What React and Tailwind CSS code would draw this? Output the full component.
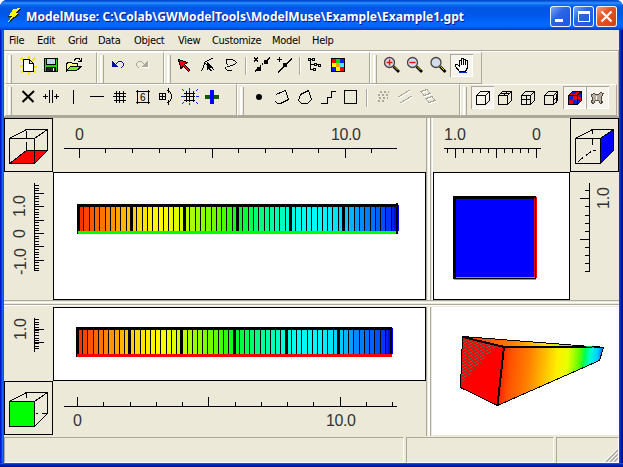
import React from "react";

const GRAY = "#aca899";

// Drawing surface whose coordinates are those of the window itself.
function Pane({ x, y, w, h, className = "", children }) {
  return (
    <svg
      className={"block shrink-0 " + className}
      width={w}
      height={h}
      viewBox={`${x} ${y} ${w} ${h}`}
      shapeRendering="crispEdges"
      fill="none"
      stroke="#000"
    >
      {children}
    </svg>
  );
}

function Tool({ x, y, pressed, children }) {
  return (
    <button
      className={
        "size-[23px] shrink-0 " +
        (pressed
          ? "bg-[#f6f4ec] shadow-[inset_1px_1px_0_#aca899,inset_-1px_-1px_0_#ffffff]"
          : "")
      }
    >
      <Pane x={x} y={y} w={23} h={23}>
        {children}
      </Pane>
    </button>
  );
}

function Bar({ width, grip = "mr-[4px]", children }) {
  return (
    <div
      className={
        "flex h-8 shrink-0 border-t border-l border-r border-b border-t-white border-l-white border-r-[#aca899] border-b-[#aca899] pt-px " +
        width
      }
    >
      <div className={"mt-px ml-[2px] h-[28px] w-[4px] shrink-0 border-l-2 border-r border-l-white border-r-[#aca899] " + grip} />
      {children}
    </div>
  );
}

const Sep = () => (
  <div className="mx-[3px] mt-[3px] h-[18px] w-[2px] shrink-0 border-l border-r border-l-[#aca899] border-r-white" />
);

const menu = [
  ["File", "w-[28px]"],
  ["Edit", "w-[31px]"],
  ["Grid", "w-[30px]"],
  ["Data", "w-[36px]"],
  ["Object", "w-[44px]"],
  ["View", "w-[34px]"],
  ["Customize", "w-[60px]"],
  ["Model", "w-[40px]"],
  ["Help", "w-[30px]"],
];

const stops = [
  [0, 255, 42, 0], [0.04, 255, 84, 0], [0.085, 255, 125, 0], [0.13, 255, 170, 0],
  [0.17, 255, 205, 0], [0.22, 255, 235, 0], [0.26, 255, 255, 0], [0.31, 225, 255, 0],
  [0.36, 165, 255, 0], [0.4, 135, 255, 0], [0.46, 70, 255, 0], [0.5, 0, 255, 30],
  [0.56, 0, 255, 110], [0.62, 0, 255, 175], [0.69, 0, 255, 240], [0.78, 0, 245, 255],
  [0.84, 0, 205, 255], [0.89, 0, 140, 255], [0.95, 0, 90, 255], [1, 0, 20, 240],
];

function rainbow(t) {
  let i = 1;
  while (i < stops.length - 1 && stops[i][0] < t) i++;
  const a = stops[i - 1];
  const b = stops[i];
  const f = Math.max(0, Math.min(1, (t - a[0]) / (b[0] - a[0])));
  return `rgb(${[1, 2, 3].map((k) => Math.round(a[k] + (b[k] - a[k]) * f)).join(",")})`;
}

function Strip({ x, y, w, edge }) {
  const n = 60;
  const step = (w - 4) / n;
  return (
    <g stroke="none">
      <rect x={x} y={y} width={w - 1} height={30} fill="#000" />
      {Array.from({ length: n }, (_, i) => {
        const a = Math.round(x + 1 + i * step) + (i % 10 === 0 ? 2 : 1);
        const b = Math.round(x + 1 + (i + 1) * step) - (i % 10 === 9 ? 1 : 0);
        return <rect key={i} x={a} y={y + 3} width={b - a} height={24} fill={rainbow((i + 0.5) / n)} />;
      })}
      <rect x={x + w - 5} y={y + 3} width={2} height={24} fill="#0010e0" />
      <rect x={x + w - 1} y={y + 1} width={1} height={26} fill="#0000ff" />
      <rect x={x + 1} y={y + 27} width={w - 2} height={3} fill={edge} />
    </g>
  );
}

function Num({ x, y, turned, len, children }) {
  return (
    <text
      x={x}
      y={y}
      transform={turned ? `rotate(-90 ${x} ${y})` : undefined}
      textLength={len}
      fill="#333"
      stroke="none"
      fontSize="16"
      fontFamily="'Liberation Sans', Arial, sans-serif"
    >
      {children}
    </text>
  );
}

// Axis ticks: every entry is a coordinate along the axis.
const hTicks = (list, y0, y1) => list.map((v) => `M${v + 0.5} ${y0}V${y1}`).join("");
const vTicks = (list, x0, x1) => list.map((v) => `M${x0} ${v + 0.5}H${x1}`).join("");
const range = (a, b, s) => {
  const out = [];
  for (let v = a; v <= b; v += s) out.push(Math.round(v));
  return out;
};

function Cube({ dx = 0, dy = 0, face }) {
  return (
    <g transform={`translate(${dx} ${dy})`}>
      <rect x="4.5" y="118.5" width="48" height="53" />
      {face === "top" && (
        <>
          <path d="M9.5 163.5H34.5L47.5 150.5H26.5Z" fill="#f00" />
          <path d="M26.5 131V138M26.5 142V150" />
        </>
      )}
      {face === "side" && (
        <>
          <path d="M34.5 138.5L47.5 129.5V150.5L34.5 163.5Z" fill="#00f" />
          <path d="M26.5 130V134M26.5 139V147M26.5 150.5H30M25 151.5L9.5 163.5" strokeDasharray="6 4" />
        </>
      )}
      {face === "front" && (
        <>
          <rect x="9.5" y="138.5" width="25" height="25" fill="#0f0" />
          <path d="M26.5 130V135M36 150.5H38M42 150.5H47" />
        </>
      )}
      <path d="M9.5 138.5H34.5V163.5H9.5ZM9.5 138.5L26.5 129.5H47.5L34.5 138.5M47.5 129.5V150.5L34.5 163.5" />
    </g>
  );
}

function Lens({ cx, sign }) {
  return (
    <g shapeRendering="auto">
      <path d={`M${cx + 4} 66.5L${cx + 9.5} 72`} strokeWidth="2.6" />
      <path d={`M${cx + 4.5} 66.5L${cx + 8} 70`} stroke="#e8d000" />
      <circle cx={cx} cy="62.5" r="5" fill="#d4dcec" stroke="#444" strokeWidth="1.3" />
      {sign && <path d={`M${cx - 3} 62.5h6` + (sign === "+" ? `M${cx} 59.5v6` : "")} stroke="#f00" strokeWidth="1.4" />}
    </g>
  );
}

const box = (x) => `M${x} 95.5h9v9h-9zl4 -4h9l-4 4m4 -4v9l-4 4`;

function FileTools() {
  return (
    <Bar width="w-[92px]" grip="mr-[5px]">
      <Tool x={17} y={54}>
        <path d="M21 58l3 3M35 58l-3 3M21 73l3 -3M36 73l-3 -3M20 65.5h3M34 66.5h3M28.5 56v3M28.5 72v3" stroke="#ffe600" strokeWidth="2" />
        <path d="M23.5 59.5h6l4 4v8h-10zM29.5 59.5v4h4" fill="#fff" />
      </Tool>
      <Tool x={40} y={54}>
        <rect x="44.5" y="58.5" width="13" height="13" fill="#22d800" />
        <rect x="46.5" y="58.5" width="9" height="6" fill="#c4d4e8" />
        <rect x="46.5" y="67.5" width="9" height="4" fill="#222" />
        <path d="M53.5 68v3" stroke="#fff" />
      </Tool>
      <Tool x={63} y={54}>
        <path d="M66.5 71.5v-8l2 -1h3l1 1h5v3" fill="#ffff80" />
        <path d="M66.5 70.5l4 -4h11l-5 4z" fill="#70f800" />
        <path d="M74 60.5l2 -2h3l2 3M78 61.5h4M81.5 58v3" />
      </Tool>
    </Bar>
  );
}

function EditTools() {
  return (
    <Bar width="w-[67px]" grip="mr-[2px]">
      <Tool x={106} y={54}>
        <path d="M112 61h1v1h1v1h1v1h1v1h1v1h1v1h-6z" fill="#00109c" stroke="none" />
        <path d="M115 64.5h1M116 63.5h1M117 62.5h1M118 61.5h4M122 62.5h1M123.5 63v3M122 66.5h1M121 67.5h1" stroke="#00109c" />
      </Tool>
      <Tool x={129} y={54}>
        <path d="M148 61h-1v1h-1v1h-1v1h-1v1h-1v1h-1v1h6z" fill={GRAY} stroke="none" />
        <path d="M144 64.5h1M143 63.5h1M142 62.5h1M138 61.5h4M137 62.5h1M136.5 63v3M137 66.5h1M138 67.5h1" stroke={GRAY} />
        <path d="M142 67.5h7M148.5 62v5" stroke="#fff" />
      </Tool>
    </Bar>
  );
}

function ObjectTools() {
  return (
    <Bar width="w-[206px]" grip="mr-[2px]">
      <Tool x={173} y={54}>
        <path d="M178.5 59.5l9 3l-3 2l5.500 5.500l-1.500 1.500l-5.500 -5.500l-2 3z" fill="#f00000" />
      </Tool>
      <Tool x={196} y={54}>
        <path d="M201.5 71v-1M202.5 70v-2M203.5 68v-3M204.5 65v-3M205 61.5h2M207 60.5h2M209 59.5h2M211 58.5h2M205 63.500l9 6" />
        <path d="M207 62l6 6h-3l2 3h-2l-1 -3l-2 2z" fill="#000" stroke="none" />
      </Tool>
      <Tool x={219} y={54}>
        <path d="M226 59.5h7M233 60.5h2M235 61.5h1M236.5 62v1M235 63.5h1M233 64.5h2M230 65.5h3M226.5 60v4M227 64.5h1M227 66.5h3M225.5 67v2M226 69.5h1M227 70.5h5" />
      </Tool>
      <Sep />
      <Tool x={250} y={54}>
        <path d="M254 57.5l4 4M258 57.5l-4 4M255 71.500l2 -2M260 66.500l1 -1M262 64.500l1 -1M267 60.500l3 -3" />
        <path d="M257 67h4v4h-4zM264 60h4v4h-4z" fill="#000" stroke="none" />
      </Tool>
      <Tool x={273} y={54}>
        <path d="M277 59.5h5M279.5 57v5M278 72.500l14 -14" />
        <path d="M283 63h4v4h-4z" fill="#000" stroke="none" />
      </Tool>
      <Sep />
      <Tool x={305} y={54}>
        <path d="M311.5 60v10M312 59.500h2M312 64.500h4M312 69.500h4M318 64.500h2" />
        <path d="M309.5 58.500h2v2h-2zM313.500 58.500h2v2h-2zM315.500 63.500h2v2h-2zM319.500 64.500h2v2h-2zM314.500 68.500h2v2h-2z" fill="#ece9d8" />
      </Tool>
      <Tool x={328} y={54}>
        <rect x="332" y="58" width="14" height="14" fill="#000" stroke="none" />
        {["#f00", "#00e000", "#0020ff", "#ffff00", "#ffa800", "#40f0ff", "#0020ff", "#ffff00", "#f00"].map((c, i) => (
          <rect key={i} x={333 + (i % 3) * 4} y={59 + Math.floor(i / 3) * 4} width="4" height="4" fill={c} stroke="none" />
        ))}
      </Tool>
    </Bar>
  );
}

function ViewTools() {
  return (
    <Bar width="w-[112px]">
      <Tool x={381} y={54}><Lens cx={389.5} sign="+" /></Tool>
      <Tool x={404} y={54}><Lens cx={412.5} sign="-" /></Tool>
      <Tool x={427} y={54}><Lens cx={436} /></Tool>
      <Tool x={450} y={54} pressed>
        <path d="M459.5 71.5l-4 -5v-2h2l2 2v-6h2v-2h2v1h2v1h2v7l-2 4z" fill="#fff" />
        <path d="M461.5 60v5M463.5 59v6M465.5 60v5" />
        <path d="M459 72.5h8" stroke="#0030d0" />
      </Tool>
    </Bar>
  );
}

function GridTools() {
  return (
    <Bar width="w-[232px]" grip="mr-[5px]">
      <Tool x={17} y={86}>
        <path d="M22.500 91l11 11M34 91l-11.500 11" strokeWidth="2" shapeRendering="auto" />
      </Tool>
      <Tool x={40} y={86}>
        <path d="M49.5 90v13M52.5 90v13M43 96.5h5M54 96.5h5M45.5 94v5M56.5 94v5" />
      </Tool>
      <Tool x={63} y={86}><path d="M73.5 90v14" /></Tool>
      <Tool x={86} y={86}><path d="M90 96.5h14" /></Tool>
      <Tool x={109} y={86}>
        <path d="M116.5 91v12M119.5 91v12M123.5 91v12M114 93.5h12M113 96.5h13M114 100.5h12" />
      </Tool>
      <Tool x={132} y={86}>
        <path d="M137.5 90v14M148.5 90v14M136 91.5h14M136 102.5h14" />
        <text x="140" y="101" fontSize="10" fill="#000" stroke="none" fontFamily="'Liberation Sans', Arial, sans-serif">6</text>
      </Tool>
      <Tool x={155} y={86}>
        <path d="M159.5 93.5h6v6h-6zM162.5 93v7M159 96.5h7M167 90.500h2M169.5 91v1M170.5 92v2M171.5 94v5M170.5 99v2M169.5 101v1M167 102.500h2M168.5 88v5M168.5 100v5" />
      </Tool>
      <Tool x={178} y={86}>
        <path d="M186.5 91v11M189.5 91v11M193.5 91v11M184 93.5h11M184 96.5h11M184 100.5h11" />
        <path d="M181 96.5h3M196 96.5h3M189.5 88v3M189.5 103v2M182 89l2 2M198 89l-2 2M182 104l2 -2M198 104l-2 -2" stroke="#0030ff" />
      </Tool>
      <Tool x={201} y={86}>
        <path d="M205 97h14" stroke="#145800" strokeWidth="4" />
        <path d="M212 90v14" stroke="#0000ff" strokeWidth="4" />
      </Tool>
    </Bar>
  );
}

function ShapeTools() {
  return (
    <Bar width="w-[223px]">
      <Tool x={248} y={86}><circle cx="259" cy="97" r="3" fill="#000" stroke="none" shapeRendering="auto" /></Tool>
      <Tool x={271} y={86}><path d="M276 94.5l9.500 -4l3 9l-8 4h-3l-2 -2" /></Tool>
      <Tool x={294} y={86}><path d="M300.5 94.5l8 -4l3 9l-4 4h-6l-3 -3z" /></Tool>
      <Tool x={317} y={86}><path d="M321 103.5h6.5v-6h4v-6h4" /></Tool>
      <Tool x={340} y={86}><path d="M344.5 90.5h12v13h-12z" /></Tool>
      <Sep />
      <Tool x={371} y={86}>
        <path d="M380 91.500h9M378 94.5h10M379 97.500h9M378 100.5h7" stroke={GRAY} strokeWidth="2" strokeDasharray="2 2" />
      </Tool>
      <Tool x={394} y={86}>
        <path d="M399 98l12 -7M401 104l12 -7" stroke="#fff" />
        <path d="M398 97l12 -7M400 103l12 -7" stroke={GRAY} />
      </Tool>
      <Tool x={417} y={86}>
        <path d="M422 92.5l6 -2l3 4l-6 2zM427 99.5l6 -2l3 4l-6 2z" stroke="#fff" />
        <path d="M421 91.5l6 -2l3 4l-6 2zM426 98.5l6 -2l3 4l-6 2z" stroke={GRAY} />
      </Tool>
    </Bar>
  );
}

function CubeTools() {
  return (
    <Bar width="w-[157px]">
      <Tool x={471} y={86} pressed><path d={box(476.5)} /></Tool>
      <Tool x={494} y={86}><path d={box(498.5) + "M501 93.5h9M504 95l4 -4"} /></Tool>
      <Tool x={517} y={86}><path d={box(521.5) + "M526.5 95v9M521 99.5h10"} /></Tool>
      <Tool x={540} y={86}><path d={box(544.5) + "M556 93.5v9M554 100l4 -4"} /></Tool>
      <Tool x={563} y={86} pressed>
        <path d="M568.5 95.5l4 -4h9v9l-4 4h-9z" fill="#f00000" />
        <path d="M569 96h4v4h-4zM573 100h4v4h-4zM572 92h4v2h-4zM579 93h2v4h-2zM578 99h2v4h-2z" fill="#0020e0" stroke="none" />
        <path d="M568 95.5h9v9M577 95.5l4 -4" />
      </Tool>
      <Tool x={586} y={86} pressed>
        <path d="M591.5 94.5l3 -1l1 1h3l2 -2l3 1l-2 3v4l1 2l-2 1l-2 -3h-3l-2 3l-2 -1l1 -4z" fill="#b8aea0" stroke="#504840" />
        <path d="M596.5 96v4" stroke="#fff" />
      </Tool>
    </Bar>
  );
}

function Model3D() {
  return (
    <Pane x={433} y={307} w={186} h={128} className="bg-white">
      <defs>
        <linearGradient id="side" gradientUnits="userSpaceOnUse" x1="500" y1="360" x2="603" y2="370">
          <stop offset="0" stopColor="#ff1800" /><stop offset=".1" stopColor="#ff5000" />
          <stop offset=".28" stopColor="#ff8000" /><stop offset=".42" stopColor="#ffb800" />
          <stop offset=".55" stopColor="#ffee00" /><stop offset=".65" stopColor="#e8ff00" />
          <stop offset=".76" stopColor="#60ff00" /><stop offset=".81" stopColor="#00ff50" />
          <stop offset=".86" stopColor="#00ffd0" /><stop offset=".93" stopColor="#00d0ff" />
          <stop offset="1" stopColor="#0040ff" />
        </linearGradient>
        <linearGradient id="lid" gradientUnits="userSpaceOnUse" x1="466" y1="0" x2="603" y2="0">
          <stop offset="0" stopColor="#ff3000" /><stop offset=".35" stopColor="#ff8000" />
          <stop offset=".6" stopColor="#ffe800" /><stop offset=".76" stopColor="#70ff00" />
          <stop offset=".88" stopColor="#00ffe0" /><stop offset="1" stopColor="#0080ff" />
        </linearGradient>
        <pattern id="weave" width="6" height="3" patternUnits="userSpaceOnUse">
          <path d="M0 2.5H2M2 1.5H4M4 .5H5" stroke="#656555" strokeWidth="1" />
        </pattern>
      </defs>
      <path d="M462.5 336.5L603.5 347.5L504.5 346.5Z" fill="url(#lid)" />
      <path d="M504.5 346.5L603.5 347.5L599.5 360.5L497.5 405.5Z" fill="url(#side)" />
      <path d="M462.5 336.5L504.5 346.5L497.5 405.5L460.5 387.5Z" fill="#ff0000" />
      <path d="M463 338L496 346L462 383Z" fill="url(#weave)" stroke="none" />
      <path d="M463 337L504 347L497.5 405M504 347H600" strokeWidth="2" />
      <path d="M586 346.5h4l4 1" stroke="#00d060" />
    </Pane>
  );
}

function Workspace() {
  return (
    <div className="grid h-[318px] grid-cols-[422px_7px_186px] grid-rows-[182px_7px_129px]">
      {/* plan view */}
      <div className="grid grid-cols-[49px_373px] grid-rows-[54px_128px]">
        <Pane x={4} y={118} w={49} h={54}><Cube face="top" /></Pane>
        <Pane x={53} y={118} w={373} h={54}>
          <path d={"M64 148.5H397" + hTicks([79, 212, 345], 148, 158) + hTicks([105, 132, 159, 185, 238, 265, 292, 318, 371], 148, 153)} />
          <Num x={75} y={140}>0</Num>
          <Num x={331} y={140} len={30}>10.0</Num>
        </Pane>
        <Pane x={4} y={172} w={49} h={128}>
          <path d={"M34.5 183V271" + vTicks([193, 206, 220, 233, 246, 260], 34, 44) + vTicks(range(185, 270.5, 2.67), 34, 39)} />
          <Num x={25} y={217} turned len={22}>1.0</Num>
          <Num x={25} y={238} turned>0</Num>
          <Num x={26} y={275} turned len={27}>-1.0</Num>
        </Pane>
        <Pane x={53} y={172} w={373} h={128} className="bg-white">
          <rect x="53.5" y="172.5" width="372" height="127" />
          <Strip x={77} y={204} w={322} edge="#00ff00" />
          <path d="M396.5 203v31" strokeWidth="2" />
        </Pane>
      </div>
      <div className="border-r border-l border-l-[#aca899] border-r-white bg-[linear-gradient(90deg,#ece9d8_0_1px,#fff_1px_3px,#aca899_3px_4px,#ece9d8_4px)]" />
      {/* side view */}
      <div className="grid grid-cols-[137px_49px] grid-rows-[54px_128px]">
        <Pane x={433} y={118} w={137} h={54}>
          <path d={"M444 148.5H541" + hTicks([455, 496, 536], 148, 158) + hTicks([447, 463, 472, 480, 488, 504, 512, 520, 528], 148, 153)} />
          <Num x={444} y={140} len={22}>1.0</Num>
          <Num x={532} y={140}>0</Num>
        </Pane>
        <Pane x={570} y={118} w={49} h={54}><Cube dx={566} face="side" /></Pane>
        <Pane x={433} y={172} w={137} h={128} className="bg-white">
          <rect x="433.5" y="172.5" width="136" height="127" />
          <g stroke="none">
            <rect x="453" y="196" width="83" height="83" fill="#000" />
            <rect x="456" y="199" width="78" height="78" fill="#0000ff" />
            <rect x="534" y="198" width="1" height="79" fill="#e00010" />
            <rect x="536" y="197" width="1" height="81" fill="#ff0000" />
            <rect x="456" y="277" width="79" height="1" fill="#00ff00" />
            <rect x="454" y="279" width="82" height="1" fill="#00ff00" />
          </g>
        </Pane>
        <Pane x={570} y={172} w={49} h={128}>
          <path d={"M589.5 183V272" + vTicks([198, 239], 580, 590) + vTicks([190, 206, 215, 223, 231, 247, 255, 263, 271], 585, 590)} />
          <Num x={609} y={209} turned len={22}>1.0</Num>
        </Pane>
      </div>
      <div className="col-span-3 border-t border-b border-t-[#aca899] border-b-[#ece9d8] bg-[linear-gradient(#ece9d8_0_1px,#fff_1px_2px,#ece9d8_2px_3px,#aca899_3px_4px,#fff_4px)]" />
      {/* cross section */}
      <div className="grid grid-cols-[49px_373px] grid-rows-[74px_55px]">
        <Pane x={4} y={307} w={49} h={74}>
          <path d={"M34.5 318V352" + vTicks([329, 342], 34, 44) + vTicks(range(319, 351, 2.67), 34, 39)} />
          <Num x={26} y={340} turned len={22}>1.0</Num>
        </Pane>
        <Pane x={53} y={307} w={373} h={74} className="bg-white">
          <rect x="53.5" y="307.5" width="372" height="73" />
          <Strip x={76} y={327} w={317} edge="#ff0000" />
        </Pane>
        <Pane x={4} y={381} w={49} h={55}><Cube dy={263} face="front" /></Pane>
        <Pane x={53} y={381} w={373} h={55}>
          <path d={"M64 406.5H397" + hTicks([77, 208, 340], 397, 407) + hTicks([103, 130, 156, 182, 235, 261, 287, 313, 366, 392], 402, 407)} />
          <Num x={73} y={426}>0</Num>
          <Num x={326} y={426} len={30}>10.0</Num>
        </Pane>
      </div>
      <div className="border-r border-l border-l-[#aca899] border-r-white bg-[linear-gradient(90deg,#ece9d8_0_1px,#fff_1px_3px,#aca899_3px_4px,#ece9d8_4px)]" />
      <Model3D />
    </div>
  );
}

const capButton =
  "flex size-[21px] items-center justify-center rounded-[3px] border border-white/90 ";

export default function App() {
  return (
    <div className="h-[467px] w-[623px] overflow-hidden bg-white">
      <div className="flex h-full flex-col rounded-t-[7px] bg-[linear-gradient(90deg,#0019c8_0_1px,#0838d8_1px_2px,#1668f4_2px_3px,#0855e5_3px_4px,#0048e0_4px_620px,#0030c0_620px_621px,#001490_621px)]">
        <header className="flex h-[30px] shrink-0 items-center rounded-t-[7px] bg-[linear-gradient(#0048c8_0,#0050d8_1px,#3090ff_3px,#0868f0_5px,#0055e4_8px,#0058ec_16px,#0068ff_23px,#0066ff_26px,#0048d8_29px,#0038c0_30px)] pr-[6px] pl-[7px]">
          <svg className="mt-[2px] h-4 w-4 shrink-0" viewBox="0 0 16 16" shapeRendering="crispEdges">
            <path d="M7 2L14 1L10 6H13L2 15L5 9H1Z" fill="#222" />
            <path d="M6 1L13 0L9 5H12L1 14L5 8H2Z" fill="#ffff00" />
          </svg>
          <h1 className="mt-[4px] ml-[3px] flex-1 whitespace-nowrap text-white">
            <svg className="block overflow-visible" width="445" height="24">
              <g fontFamily="'Noto Sans', 'Open Sans', sans-serif" fontWeight="700" fontSize="13">
                <text x="1" y="17" textLength="438" lengthAdjust="spacingAndGlyphs" fill="#0a1883">{"ModelMuse: C:\\Colab\\GWModelTools\\ModelMuse\\Example\\Example1.gpt"}</text>
                <text x="0" y="16" textLength="438" lengthAdjust="spacingAndGlyphs" fill="#fff">{"ModelMuse: C:\\Colab\\GWModelTools\\ModelMuse\\Example\\Example1.gpt"}</text>
              </g>
            </svg>
          </h1>
          <div className="mt-[3px] flex gap-[2px]">
            <button className={capButton + "bg-[linear-gradient(135deg,#7ca8f8,#2c64e4_40%,#1858e8)]"}>
              <span className="mt-[7px] mr-[4px] h-[3px] w-[8px] bg-white" />
            </button>
            <button className={capButton + "bg-[linear-gradient(135deg,#7ca8f8,#2c64e4_40%,#1858e8)]"}>
              <span className="h-[11px] w-[12px] border border-t-[3px] border-white" />
            </button>
            <button className={capButton + "bg-[linear-gradient(135deg,#f0a080,#e45424_40%,#d84010)]"}>
              <svg width="13" height="13" viewBox="0 0 13 13"><path d="M1.5 1.5L11.5 11.5M11.5 1.5L1.5 11.5" stroke="#fff" strokeWidth="2.2" /></svg>
            </button>
          </div>
        </header>
        <main className="mr-1 ml-1 flex h-[433px] shrink-0 flex-col overflow-hidden bg-[#ece9d8]">
          <nav className="flex h-5 shrink-0 items-center pl-[5px] font-['DejaVu_Sans_Condensed','DejaVu_Sans',sans-serif] text-[11px] leading-none tracking-[-0.3px] text-black [font-stretch:condensed]">
            {menu.map(([label, width]) => (
              <span key={label} className={"shrink-0 whitespace-nowrap " + width}>{label}</span>
            ))}
          </nav>
          <div className="flex h-[68px] shrink-0 flex-col border-t border-r border-b-2 border-[#aca899] pl-px shadow-[inset_0_1px_0_#fff]">
            <div className="mt-px flex h-8"><FileTools /><EditTools /><ObjectTools /><ViewTools /></div>
            <div className="flex h-8"><GridTools /><ShapeTools /><CubeTools /></div>
          </div>
          <Workspace />
          <footer className="mt-px flex h-[26px] shrink-0 gap-[2px]">
            <div className="w-[400px] border border-t-[#aca899] border-r-white border-b-white border-l-[#aca899]" />
            <div className="w-[148px] border border-t-[#aca899] border-r-white border-b-white border-l-[#aca899]" />
            <div className="flex flex-1 items-end justify-end border border-t-[#aca899] border-r-white border-b-white border-l-[#aca899]">
              <svg width="13" height="13" viewBox="0 0 13 13" fill="none">
                <path d="M0 12L12 0M4 12L12 4M8 12L12 8" stroke="#fff" />
                <path d="M1 13L13 1M5 13L13 5M9 13L13 9" stroke={GRAY} strokeWidth="1.5" />
              </svg>
            </div>
          </footer>
        </main>
        <div className="h-[4px] shrink-0 bg-[linear-gradient(#0054f0_0_1px,#0030c8_1px_2px,#00189c_2px)]" />
      </div>
    </div>
  );
}
